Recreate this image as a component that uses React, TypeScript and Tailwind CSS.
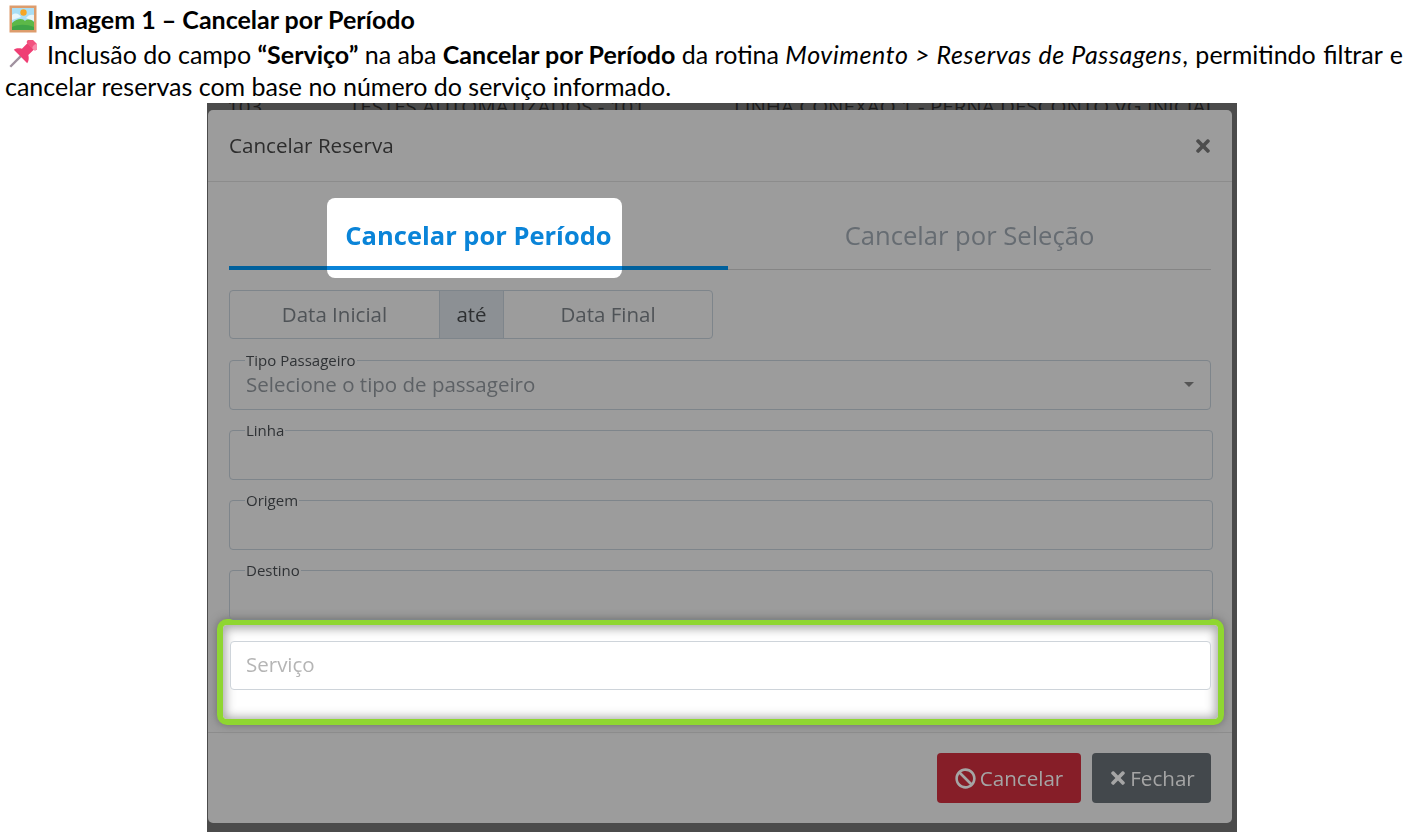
import { FaBan, FaTimes } from "react-icons/fa";

function PictureEmoji() {
  return (
    <svg width="28" height="28" viewBox="0 0 28 28" className="shrink-0">
      <rect x="0.5" y="0.5" width="27" height="27" fill="#dd9c6c" />
      <rect x="3" y="3" width="22" height="22" fill="#a9def5" />
      <circle cx="14.5" cy="7.5" r="3.2" fill="#f6a623" />
      <path d="M3 10c4-3 7-1 9 2l-9 3zM17 13c2-3 5-4 8-3v6z" fill="#e8f6fb" />
      <path d="M3 25v-7c5-5 11-5 13-2 2-2 6-2 9 1v8z" fill="#5cb848" />
      <path d="M3 25v-3c6-3 15-3 22 0v3z" fill="#3fa447" />
    </svg>
  );
}

function PinEmoji() {
  return (
    <svg width="28" height="28" viewBox="0 0 28 28" className="shrink-0">
      <g transform="rotate(45 14 14)">
        <rect x="12.800" y="16" width="2.400" height="16" fill="#a0919f" />
        <path d="M9.500 3h9v8c2.500 1.500 4.500 3.500 5 6.500h-19c.5-3 2.500-5 5-6.500z" fill="#ef3f74" />
        <rect x="7.500" y="-3" width="13" height="6.500" rx="2.500" fill="#f2527f" />
        <rect x="15.500" y="-3" width="5" height="6.500" rx="2.500" fill="#f98bab" />
      </g>
    </svg>
  );
}

function LegendField({ label }: { label: string }) {
  return (
    <fieldset className="h-[58px] w-[984px] rounded-[4px] border border-[#7e858b] px-[16px]">
      <legend className="-mb-[1px] -ml-[1px] px-[1px] text-[15px] leading-[16px] text-[#2f3235]">{label}</legend>
    </fieldset>
  );
}

export default function App() {
  return (
    <div className="h-[837px] w-[1411px] overflow-hidden bg-white font-['Lato',sans-serif] text-black">
      <div className="flex h-[34px] items-center gap-[10px] pl-[9px] pt-[4px] text-[25px] font-bold leading-[30px]">
        <PictureEmoji />
        <span>Imagem 1 – Cancelar por Período</span>
      </div>
      <div className="flex h-[36px] items-center gap-[10px] whitespace-nowrap pl-[9px] pt-[4px] text-[25px] leading-[30px]">
        <PinEmoji />
        <span>
          Inclusão do campo <b>“Serviço”</b> na aba <b>Cancelar por Período</b> da rotina{" "}
          <i className="tracking-[0.6px]">Movimento &gt; Reservas de Passagens</i>
          <span className="[word-spacing:1px]">, permitindo filtrar e</span>
        </span>
      </div>
      <div className="h-[33px] whitespace-nowrap pl-[5px] text-[25px] leading-[32px]">
        cancelar reservas com base no número do serviço informado.
      </div>

      <div className="ml-[207px] h-[729px] w-[1030px] bg-[#4b4b4b] font-['Open_Sans',sans-serif]">
        <div className="flex h-[7px] items-end overflow-hidden text-[20.500px] leading-[8px] text-[#1c1c1c]">
          <span className="ml-[20px] w-[122px]">103</span>
          <span className="w-[385px]">TESTES AUTOMATIZADOS - 101</span>
          <span>LINHA CONEXAO 1 - PERNA DESCONTO VG INICIAL</span>
        </div>

        <div className="ml-px h-[713px] w-[1024px] rounded-[5px] bg-[#9c9c9c] blur-[0.4px]">
          <div className="flex h-[72px] items-center justify-between border-b border-[#8c8c8c] pl-[21px] pr-[19px] text-[20.600px] text-[#2d2d2d]">
            <span>Cancelar Reserva</span>
            <FaTimes className="size-[20px] text-[#4d4d4d]" />
          </div>

          <div className="px-[21px]">
            <div className="mt-[16px] flex h-[72px] w-[982px] items-end">
              <div className="relative flex h-[72px] w-[499px] items-center justify-center border-b-[4px] border-[#00609c]">
                <div className="absolute -bottom-[12px] left-[98px] top-0 w-[295px] rounded-[8px] bg-white" />
                <div className="absolute -bottom-[4px] left-[98px] h-[4px] w-[295px] bg-[#0a84d8]" />
                <span className="relative pt-[7px] text-[25.500px] font-bold text-[#0a84d8]">Cancelar por Período</span>
              </div>
              <div className="flex h-[72px] flex-1 items-center justify-center border-b border-[#858585] pt-[5px] text-[25.600px] text-[#666c72]">
                Cancelar por Seleção
              </div>
            </div>

            <div className="mt-[20px] flex h-[49px] w-[484px] rounded-[4px] border border-[#7e858b] text-[20.500px] text-[#4f5357]">
              <div className="flex w-[209px] items-center justify-center">Data Inicial</div>
              <div className="flex w-[65px] items-center justify-center border-x border-[#7e858b] bg-[#8c9094] text-[#2d2f31]">até</div>
              <div className="flex flex-1 items-center justify-center">Data Final</div>
            </div>

            <div className="mt-[13px] flex flex-col gap-[12px]">
              <fieldset className="relative h-[58px] w-[982px] rounded-[4px] border border-[#7e858b] px-[16px] text-[20.500px] leading-[24px] text-[#5d6165]">
                <legend className="-mb-[1px] -ml-[1px] px-[1px] text-[15px] leading-[16px] text-[#2f3235]">Tipo Passageiro</legend>
                <span className="block pt-[5px]">Selecione o tipo de passageiro</span>
                <span className="absolute right-[16px] top-[15px] h-0 w-0 border-x-[5px] border-t-[5px] border-x-transparent border-t-[#555]" />
              </fieldset>
              <LegendField label="Linha" />
              <LegendField label="Origem" />
              <LegendField label="Destino" />
            </div>

            <div className="-ml-[12px] -mt-[1px] flex h-[106px] w-[1007px] items-start rounded-[10px] border-[6px] border-[#8fd631] bg-white px-[7px] pt-[16px] shadow-[inset_0_1px_10px_3px_rgba(90,90,90,0.5),0_0_8px_rgba(60,60,60,0.5)]">
              <div className="flex h-[49px] w-[981px] items-center rounded-[4px] border border-[#ced4da] bg-white px-[15px] pb-[2px] text-[20.500px] text-[#b5b5b5]">
                Serviço
              </div>
            </div>
          </div>

          <div className="mt-[7px] flex h-[91px] justify-end gap-[11px] border-t border-[#8c8c8c] pr-[21px] pt-[20px] text-[20.600px]">
            <div className="flex h-[50px] w-[144px] items-center justify-center gap-[4px] rounded-[4px] bg-[#861e28] text-[#a5a5a5]">
              <FaBan className="size-[21px]" />
              Cancelar
            </div>
            <div className="flex h-[50px] w-[119px] items-center justify-center gap-[2px] rounded-[4px] bg-[#43484c] text-[#a5a5a5]">
              <FaTimes className="size-[20px]" />
              Fechar
            </div>
          </div>
        </div>
      </div>
    </div>
  );
}
